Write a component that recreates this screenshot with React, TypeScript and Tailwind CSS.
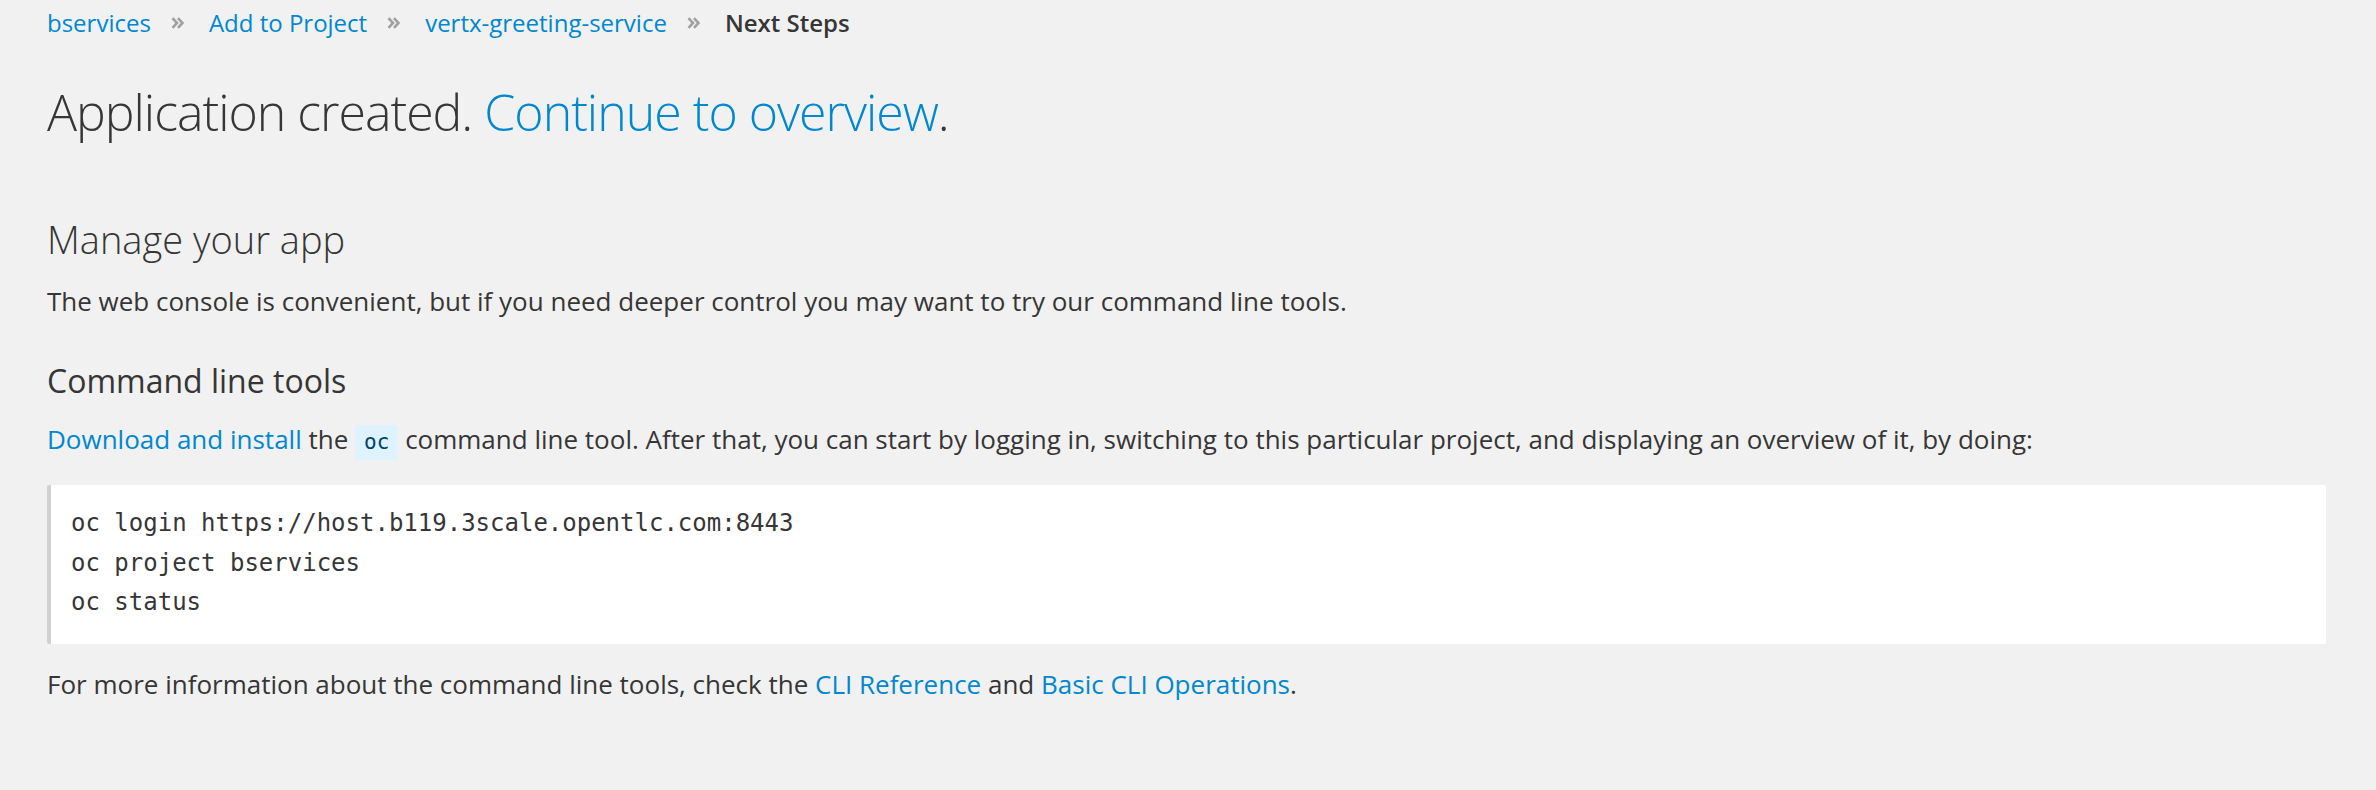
import React from "react";

function Sep() {
  return (
    <svg width="13" height="12" viewBox="0 0 13 12" className="ml-[20px] mr-[25px] shrink-0" aria-hidden="true">
      <path d="M1.5 1.2 L6 6 L1.5 10.8" fill="none" stroke="#a0a0a0" strokeWidth="2.6" />
      <path d="M7 1.2 L11.5 6 L7 10.8" fill="none" stroke="#a0a0a0" strokeWidth="2.6" />
    </svg>
  );
}

export default function App() {
  const sans = { fontFamily: '"Open Sans", "Noto Sans", sans-serif' };
  const mono = { fontFamily: '"DejaVu Sans Mono", "Liberation Mono", monospace' };
  return (
    <div className="min-h-[790px] w-full bg-[#f1f1f1] pl-[47px] pr-[50px] text-[#363636]" style={sans}>
      <div className="flex items-center pt-[5px] h-[41px] text-[24px] leading-[36px]">
        <a className="text-[#0088ce]">bservices</a>
        <Sep />
        <a className="text-[#0088ce]">Add to Project</a>
        <Sep />
        <a className="text-[#0088ce]">vertx-greeting-service</a>
        <Sep />
        <span className="font-semibold text-[#363636]">Next Steps</span>
      </div>

      <h1 className="mt-[41px] text-[50px] leading-[60px] font-light tracking-[-1px]">
        Application created. <a className="text-[#0088ce]">Continue to overview</a>.
      </h1>

      <h2 className="mt-[74px] text-[38px] leading-[46px] font-light">Manage your app</h2>
      <p className="mt-[21px] text-[26px] leading-[36px]">
        The web console is convenient, but if you need deeper control you may want to try our command line tools.
      </p>

      <h3 className="mt-[42px] text-[32px] leading-[40px] font-normal">Command line tools</h3>
      <p className="mt-[20px] text-[26px] leading-[36px]">
        <a className="text-[#0088ce]">Download and install</a> the{" "}
        <code
          className="inline-block h-[35px] px-[9px] bg-[#def3ff] text-[#004368] text-[21px] leading-[35px]"
          style={mono}
        >
          oc
        </code>{" "}
        command line tool. After that, you can start by logging in, switching to this particular project, and displaying an
        overview of it, by doing:
      </p>

      <div
        className="mt-[25px] rounded-[2px] border-l-[4px] border-[#d1d1d1] bg-white pl-[20px] pt-[19px] pb-[21px] text-[24px] leading-[39.5px] text-[#363636]"
        style={mono}
      >
        <div>oc login https://host.b119.3scale.opentlc.com:8443</div>
        <div>oc project bservices</div>
        <div>oc status</div>
      </div>

      <p className="mt-[22px] text-[26px] leading-[36px]">
        For more information about the command line tools, check the <a className="text-[#0088ce]">CLI Reference</a> and{" "}
        <a className="text-[#0088ce]">Basic CLI Operations</a>.
      </p>
    </div>
  );
}
